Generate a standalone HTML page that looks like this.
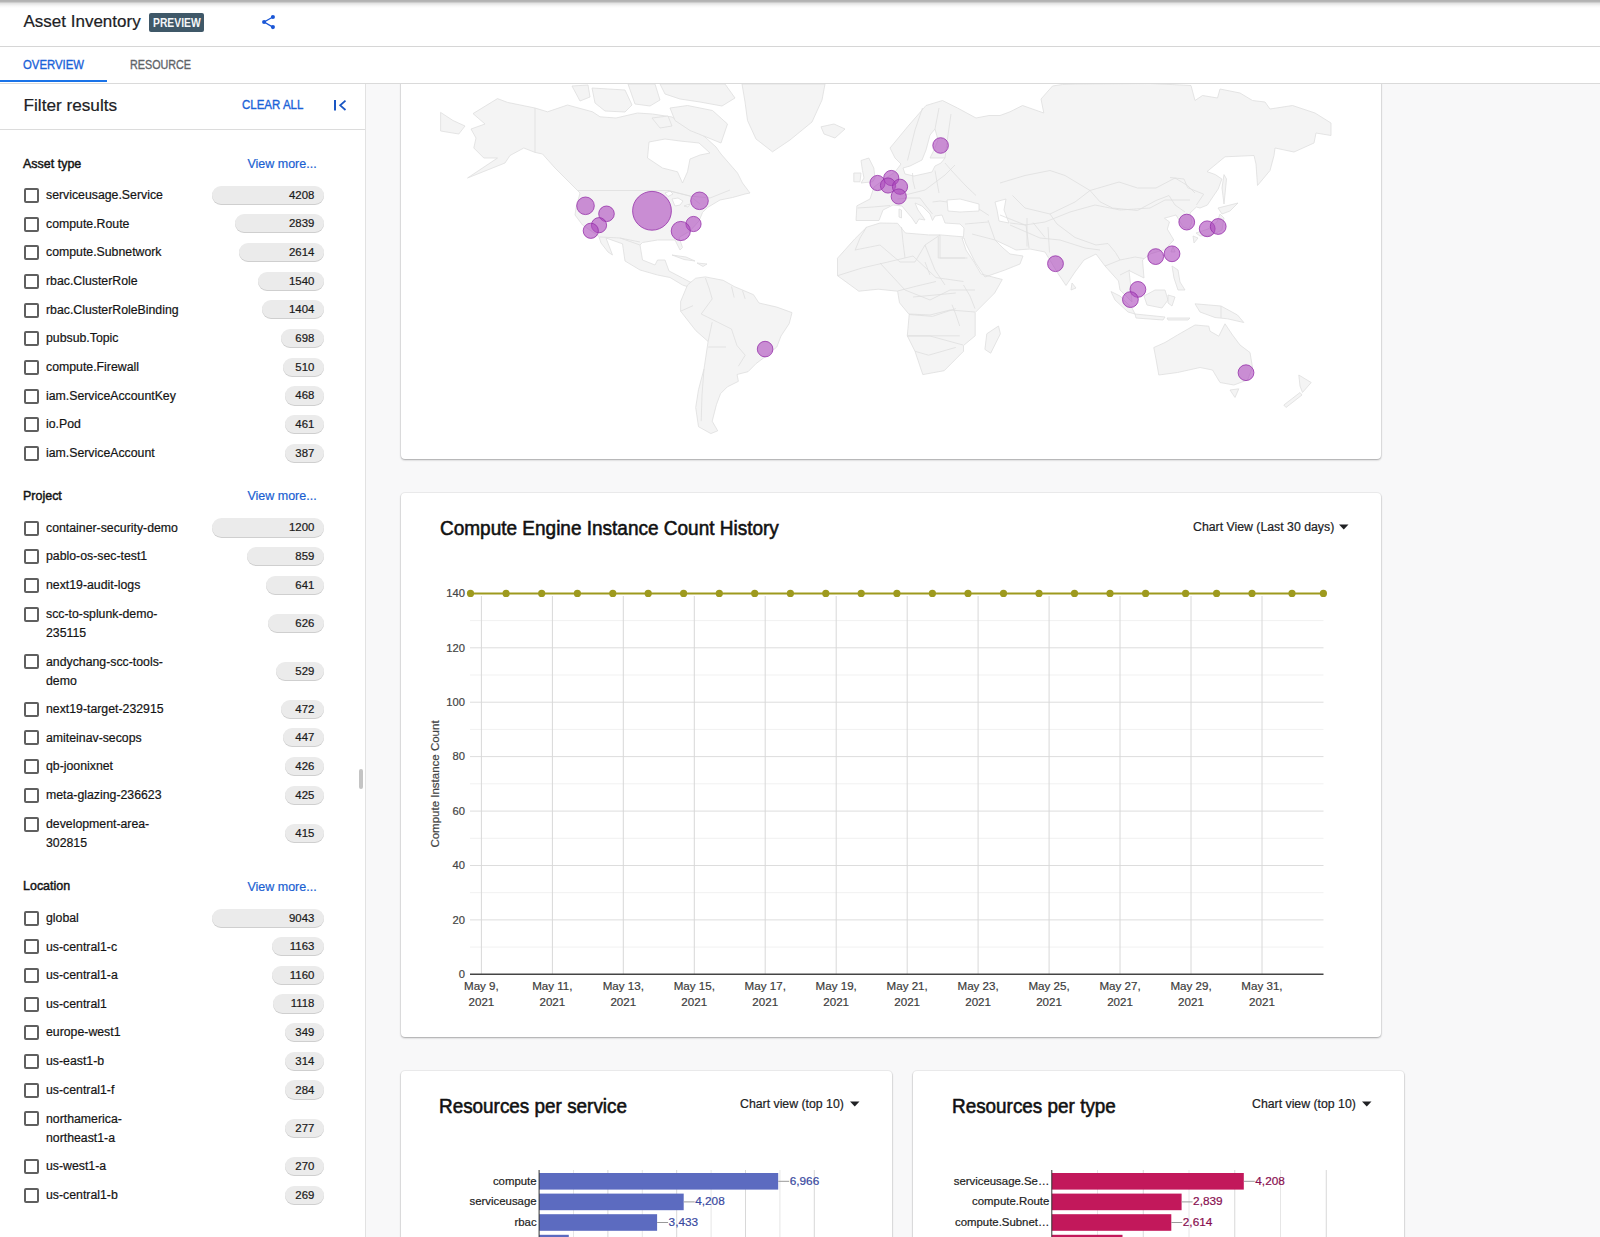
<!DOCTYPE html><html><head><meta charset="utf-8"><style>
html,body{margin:0;padding:0;width:1600px;height:1237px;overflow:hidden;background:#fff;position:relative;font-family:"Liberation Sans",sans-serif}
.t{position:absolute;white-space:nowrap;line-height:1;-webkit-text-stroke:0.2px currentColor}
</style></head><body>
<div style="position:absolute;left:0;top:0;width:1600px;height:8px;background:linear-gradient(#b0b0b0 0px,#b6b6b6 1.5px,#e4e4e4 3.5px,#f8f8f8 6px,#fff 8px)"></div>
<div class="t" style="top:13.31px;font-size:17px;color:#202124;left:23.50px;">Asset Inventory</div>
<div style="position:absolute;left:149.4px;top:13.4px;width:54.6px;height:18.5px;background:#3f5868;border-radius:2px"></div>
<div class="t" style="top:17.29px;font-size:12.3px;color:#f4f6f8;font-weight:700;-webkit-text-stroke:0;left:152.80px;transform:scaleX(0.84);transform-origin:0 0;">PREVIEW</div>
<svg style="position:absolute;left:260px;top:13px" width="18" height="18" viewBox="0 0 18 18">
<g fill="#1a56d6"><circle cx="12.9" cy="3.95" r="2.05"/><circle cx="4.1" cy="9" r="2.05"/><circle cx="12.9" cy="14.1" r="2.05"/></g>
<path d="M12.9 3.95 L4.1 9 L12.9 14.1" stroke="#1a56d6" stroke-width="1.3" fill="none"/></svg>
<div style="position:absolute;left:0;top:46px;width:1600px;height:1px;background:#d6d6d6"></div>
<div class="t" style="top:58.00px;font-size:13px;color:#1a62d8;left:23.00px;-webkit-text-stroke:0.35px currentColor;transform:scaleX(0.874);transform-origin:0 0;">OVERVIEW</div>
<div class="t" style="top:58.00px;font-size:13px;color:#5f6368;left:130.00px;-webkit-text-stroke:0.35px currentColor;transform:scaleX(0.828);transform-origin:0 0;">RESOURCE</div>
<div style="position:absolute;left:0;top:80px;width:107px;height:2px;background:#1a73e8"></div>
<div style="position:absolute;left:0;top:82.5px;width:1600px;height:1px;background:#dadada"></div>
<div style="position:absolute;left:366px;top:83.5px;width:1234px;height:1154px;background:#f8f8f9"></div>
<div style="position:absolute;left:0;top:83.5px;width:365px;height:1154px;background:#fff;border-right:1px solid #e2e2e2"></div>
<div class="t" style="top:96.74px;font-size:17.2px;color:#202124;left:23.50px;">Filter results</div>
<div class="t" style="top:99.22px;font-size:12.5px;color:#1a62d8;left:241.50px;-webkit-text-stroke:0.35px currentColor;transform:scaleX(0.92);transform-origin:0 0;">CLEAR ALL</div>
<svg style="position:absolute;left:332px;top:97px" width="16" height="16" viewBox="0 0 16 16">
<path d="M3 3 V13.5" stroke="#1a56c4" stroke-width="2" fill="none"/>
<path d="M13.5 3.6 L8.2 8.3 L13.5 13" stroke="#1a56c4" stroke-width="1.8" fill="none"/></svg>
<div style="position:absolute;left:0;top:128.5px;width:365px;height:1px;background:#dcdcdc"></div>
<div style="position:absolute;left:359px;top:769px;width:4px;height:20px;background:#c4c4c4;border-radius:2px"></div>
<div class="t" style="top:157.66px;font-size:12.8px;color:#141414;left:23.00px;-webkit-text-stroke:0.45px currentColor;transform:scaleX(0.975);transform-origin:0 0;">Asset type</div>
<div class="t" style="top:157.72px;font-size:12.5px;color:#1a5fd2;left:247.40px;">View more...</div>
<div style="position:absolute;left:23.5px;top:187.80px;width:11px;height:11px;border:2px solid #5f5f5f;border-radius:2px"></div>
<div class="t" style="top:188.99px;font-size:12.3px;color:#141414;left:46.00px;">serviceusage.Service</div>
<div style="position:absolute;left:212.4px;top:185.50px;width:111.9px;height:18.3px;background:#ebebeb;border-radius:9.5px;box-shadow:0 1px 0.5px #cfcfcf"></div>
<div class="t" style="top:189.65px;font-size:11.4px;color:#1a1a1a;right:1285.70px;">4208</div>
<div style="position:absolute;left:23.5px;top:216.50px;width:11px;height:11px;border:2px solid #5f5f5f;border-radius:2px"></div>
<div class="t" style="top:217.69px;font-size:12.3px;color:#141414;left:46.00px;">compute.Route</div>
<div style="position:absolute;left:235.2px;top:214.20px;width:89.1px;height:18.3px;background:#ebebeb;border-radius:9.5px;box-shadow:0 1px 0.5px #cfcfcf"></div>
<div class="t" style="top:218.35px;font-size:11.4px;color:#1a1a1a;right:1285.70px;">2839</div>
<div style="position:absolute;left:23.5px;top:245.20px;width:11px;height:11px;border:2px solid #5f5f5f;border-radius:2px"></div>
<div class="t" style="top:246.39px;font-size:12.3px;color:#141414;left:46.00px;">compute.Subnetwork</div>
<div style="position:absolute;left:239.4px;top:242.90px;width:84.9px;height:18.3px;background:#ebebeb;border-radius:9.5px;box-shadow:0 1px 0.5px #cfcfcf"></div>
<div class="t" style="top:247.05px;font-size:11.4px;color:#1a1a1a;right:1285.70px;">2614</div>
<div style="position:absolute;left:23.5px;top:273.90px;width:11px;height:11px;border:2px solid #5f5f5f;border-radius:2px"></div>
<div class="t" style="top:275.09px;font-size:12.3px;color:#141414;left:46.00px;">rbac.ClusterRole</div>
<div style="position:absolute;left:258.3px;top:271.60px;width:66.0px;height:18.3px;background:#ebebeb;border-radius:9.5px;box-shadow:0 1px 0.5px #cfcfcf"></div>
<div class="t" style="top:275.75px;font-size:11.4px;color:#1a1a1a;right:1285.70px;">1540</div>
<div style="position:absolute;left:23.5px;top:302.50px;width:11px;height:11px;border:2px solid #5f5f5f;border-radius:2px"></div>
<div class="t" style="top:303.69px;font-size:12.3px;color:#141414;left:46.00px;">rbac.ClusterRoleBinding</div>
<div style="position:absolute;left:262.3px;top:300.20px;width:62.0px;height:18.3px;background:#ebebeb;border-radius:9.5px;box-shadow:0 1px 0.5px #cfcfcf"></div>
<div class="t" style="top:304.35px;font-size:11.4px;color:#1a1a1a;right:1285.70px;">1404</div>
<div style="position:absolute;left:23.5px;top:331.20px;width:11px;height:11px;border:2px solid #5f5f5f;border-radius:2px"></div>
<div class="t" style="top:332.39px;font-size:12.3px;color:#141414;left:46.00px;">pubsub.Topic</div>
<div style="position:absolute;left:281.0px;top:328.90px;width:43.3px;height:18.3px;background:#ebebeb;border-radius:9.5px;box-shadow:0 1px 0.5px #cfcfcf"></div>
<div class="t" style="top:333.05px;font-size:11.4px;color:#1a1a1a;right:1285.70px;">698</div>
<div style="position:absolute;left:23.5px;top:359.90px;width:11px;height:11px;border:2px solid #5f5f5f;border-radius:2px"></div>
<div class="t" style="top:361.09px;font-size:12.3px;color:#141414;left:46.00px;">compute.Firewall</div>
<div style="position:absolute;left:282.9px;top:357.60px;width:41.4px;height:18.3px;background:#ebebeb;border-radius:9.5px;box-shadow:0 1px 0.5px #cfcfcf"></div>
<div class="t" style="top:361.75px;font-size:11.4px;color:#1a1a1a;right:1285.70px;">510</div>
<div style="position:absolute;left:23.5px;top:388.60px;width:11px;height:11px;border:2px solid #5f5f5f;border-radius:2px"></div>
<div class="t" style="top:389.79px;font-size:12.3px;color:#141414;left:46.00px;">iam.ServiceAccountKey</div>
<div style="position:absolute;left:284.8px;top:386.30px;width:39.5px;height:18.3px;background:#ebebeb;border-radius:9.5px;box-shadow:0 1px 0.5px #cfcfcf"></div>
<div class="t" style="top:390.45px;font-size:11.4px;color:#1a1a1a;right:1285.70px;">468</div>
<div style="position:absolute;left:23.5px;top:417.30px;width:11px;height:11px;border:2px solid #5f5f5f;border-radius:2px"></div>
<div class="t" style="top:418.49px;font-size:12.3px;color:#141414;left:46.00px;">io.Pod</div>
<div style="position:absolute;left:284.8px;top:415.00px;width:39.5px;height:18.3px;background:#ebebeb;border-radius:9.5px;box-shadow:0 1px 0.5px #cfcfcf"></div>
<div class="t" style="top:419.15px;font-size:11.4px;color:#1a1a1a;right:1285.70px;">461</div>
<div style="position:absolute;left:23.5px;top:445.90px;width:11px;height:11px;border:2px solid #5f5f5f;border-radius:2px"></div>
<div class="t" style="top:447.09px;font-size:12.3px;color:#141414;left:46.00px;">iam.ServiceAccount</div>
<div style="position:absolute;left:284.8px;top:443.60px;width:39.5px;height:18.3px;background:#ebebeb;border-radius:9.5px;box-shadow:0 1px 0.5px #cfcfcf"></div>
<div class="t" style="top:447.75px;font-size:11.4px;color:#1a1a1a;right:1285.70px;">387</div>
<div class="t" style="top:489.66px;font-size:12.8px;color:#141414;left:23.00px;-webkit-text-stroke:0.45px currentColor;transform:scaleX(0.975);transform-origin:0 0;">Project</div>
<div class="t" style="top:489.72px;font-size:12.5px;color:#1a5fd2;left:247.40px;">View more...</div>
<div style="position:absolute;left:23.5px;top:520.60px;width:11px;height:11px;border:2px solid #5f5f5f;border-radius:2px"></div>
<div class="t" style="top:521.79px;font-size:12.3px;color:#141414;left:46.00px;">container-security-demo</div>
<div style="position:absolute;left:212.0px;top:518.30px;width:112.3px;height:18.3px;background:#ebebeb;border-radius:9.5px;box-shadow:0 1px 0.5px #cfcfcf"></div>
<div class="t" style="top:522.45px;font-size:11.4px;color:#1a1a1a;right:1285.70px;">1200</div>
<div style="position:absolute;left:23.5px;top:549.20px;width:11px;height:11px;border:2px solid #5f5f5f;border-radius:2px"></div>
<div class="t" style="top:550.39px;font-size:12.3px;color:#141414;left:46.00px;">pablo-os-sec-test1</div>
<div style="position:absolute;left:246.7px;top:546.90px;width:77.6px;height:18.3px;background:#ebebeb;border-radius:9.5px;box-shadow:0 1px 0.5px #cfcfcf"></div>
<div class="t" style="top:551.05px;font-size:11.4px;color:#1a1a1a;right:1285.70px;">859</div>
<div style="position:absolute;left:23.5px;top:577.80px;width:11px;height:11px;border:2px solid #5f5f5f;border-radius:2px"></div>
<div class="t" style="top:578.99px;font-size:12.3px;color:#141414;left:46.00px;">next19-audit-logs</div>
<div style="position:absolute;left:265.7px;top:575.50px;width:58.6px;height:18.3px;background:#ebebeb;border-radius:9.5px;box-shadow:0 1px 0.5px #cfcfcf"></div>
<div class="t" style="top:579.65px;font-size:11.4px;color:#1a1a1a;right:1285.70px;">641</div>
<div style="position:absolute;left:23.5px;top:606.60px;width:11px;height:11px;border:2px solid #5f5f5f;border-radius:2px"></div>
<div class="t" style="top:607.79px;font-size:12.3px;color:#141414;left:46.00px;">scc-to-splunk-demo-</div>
<div class="t" style="top:626.79px;font-size:12.3px;color:#141414;left:46.00px;">235115</div>
<div style="position:absolute;left:267.9px;top:613.90px;width:56.4px;height:18.3px;background:#ebebeb;border-radius:9.5px;box-shadow:0 1px 0.5px #cfcfcf"></div>
<div class="t" style="top:618.05px;font-size:11.4px;color:#1a1a1a;right:1285.70px;">626</div>
<div style="position:absolute;left:23.5px;top:654.40px;width:11px;height:11px;border:2px solid #5f5f5f;border-radius:2px"></div>
<div class="t" style="top:655.59px;font-size:12.3px;color:#141414;left:46.00px;">andychang-scc-tools-</div>
<div class="t" style="top:674.59px;font-size:12.3px;color:#141414;left:46.00px;">demo</div>
<div style="position:absolute;left:275.6px;top:661.70px;width:48.7px;height:18.3px;background:#ebebeb;border-radius:9.5px;box-shadow:0 1px 0.5px #cfcfcf"></div>
<div class="t" style="top:665.85px;font-size:11.4px;color:#1a1a1a;right:1285.70px;">529</div>
<div style="position:absolute;left:23.5px;top:701.90px;width:11px;height:11px;border:2px solid #5f5f5f;border-radius:2px"></div>
<div class="t" style="top:703.09px;font-size:12.3px;color:#141414;left:46.00px;">next19-target-232915</div>
<div style="position:absolute;left:281.0px;top:699.60px;width:43.3px;height:18.3px;background:#ebebeb;border-radius:9.5px;box-shadow:0 1px 0.5px #cfcfcf"></div>
<div class="t" style="top:703.75px;font-size:11.4px;color:#1a1a1a;right:1285.70px;">472</div>
<div style="position:absolute;left:23.5px;top:730.40px;width:11px;height:11px;border:2px solid #5f5f5f;border-radius:2px"></div>
<div class="t" style="top:731.59px;font-size:12.3px;color:#141414;left:46.00px;">amiteinav-secops</div>
<div style="position:absolute;left:283.0px;top:728.10px;width:41.3px;height:18.3px;background:#ebebeb;border-radius:9.5px;box-shadow:0 1px 0.5px #cfcfcf"></div>
<div class="t" style="top:732.25px;font-size:11.4px;color:#1a1a1a;right:1285.70px;">447</div>
<div style="position:absolute;left:23.5px;top:759.30px;width:11px;height:11px;border:2px solid #5f5f5f;border-radius:2px"></div>
<div class="t" style="top:760.49px;font-size:12.3px;color:#141414;left:46.00px;">qb-joonixnet</div>
<div style="position:absolute;left:284.8px;top:757.00px;width:39.5px;height:18.3px;background:#ebebeb;border-radius:9.5px;box-shadow:0 1px 0.5px #cfcfcf"></div>
<div class="t" style="top:761.15px;font-size:11.4px;color:#1a1a1a;right:1285.70px;">426</div>
<div style="position:absolute;left:23.5px;top:787.90px;width:11px;height:11px;border:2px solid #5f5f5f;border-radius:2px"></div>
<div class="t" style="top:789.09px;font-size:12.3px;color:#141414;left:46.00px;">meta-glazing-236623</div>
<div style="position:absolute;left:284.8px;top:785.60px;width:39.5px;height:18.3px;background:#ebebeb;border-radius:9.5px;box-shadow:0 1px 0.5px #cfcfcf"></div>
<div class="t" style="top:789.75px;font-size:11.4px;color:#1a1a1a;right:1285.70px;">425</div>
<div style="position:absolute;left:23.5px;top:816.70px;width:11px;height:11px;border:2px solid #5f5f5f;border-radius:2px"></div>
<div class="t" style="top:817.89px;font-size:12.3px;color:#141414;left:46.00px;">development-area-</div>
<div class="t" style="top:836.89px;font-size:12.3px;color:#141414;left:46.00px;">302815</div>
<div style="position:absolute;left:284.8px;top:824.00px;width:39.5px;height:18.3px;background:#ebebeb;border-radius:9.5px;box-shadow:0 1px 0.5px #cfcfcf"></div>
<div class="t" style="top:828.15px;font-size:11.4px;color:#1a1a1a;right:1285.70px;">415</div>
<div class="t" style="top:880.46px;font-size:12.8px;color:#141414;left:23.00px;-webkit-text-stroke:0.45px currentColor;transform:scaleX(0.975);transform-origin:0 0;">Location</div>
<div class="t" style="top:880.52px;font-size:12.5px;color:#1a5fd2;left:247.40px;">View more...</div>
<div style="position:absolute;left:23.5px;top:910.90px;width:11px;height:11px;border:2px solid #5f5f5f;border-radius:2px"></div>
<div class="t" style="top:912.09px;font-size:12.3px;color:#141414;left:46.00px;">global</div>
<div style="position:absolute;left:212.4px;top:908.60px;width:111.9px;height:18.3px;background:#ebebeb;border-radius:9.5px;box-shadow:0 1px 0.5px #cfcfcf"></div>
<div class="t" style="top:912.75px;font-size:11.4px;color:#1a1a1a;right:1285.70px;">9043</div>
<div style="position:absolute;left:23.5px;top:939.40px;width:11px;height:11px;border:2px solid #5f5f5f;border-radius:2px"></div>
<div class="t" style="top:940.59px;font-size:12.3px;color:#141414;left:46.00px;">us-central1-c</div>
<div style="position:absolute;left:271.5px;top:937.10px;width:52.8px;height:18.3px;background:#ebebeb;border-radius:9.5px;box-shadow:0 1px 0.5px #cfcfcf"></div>
<div class="t" style="top:941.25px;font-size:11.4px;color:#1a1a1a;right:1285.70px;">1163</div>
<div style="position:absolute;left:23.5px;top:968.00px;width:11px;height:11px;border:2px solid #5f5f5f;border-radius:2px"></div>
<div class="t" style="top:969.19px;font-size:12.3px;color:#141414;left:46.00px;">us-central1-a</div>
<div style="position:absolute;left:271.5px;top:965.70px;width:52.8px;height:18.3px;background:#ebebeb;border-radius:9.5px;box-shadow:0 1px 0.5px #cfcfcf"></div>
<div class="t" style="top:969.85px;font-size:11.4px;color:#1a1a1a;right:1285.70px;">1160</div>
<div style="position:absolute;left:23.5px;top:996.60px;width:11px;height:11px;border:2px solid #5f5f5f;border-radius:2px"></div>
<div class="t" style="top:997.79px;font-size:12.3px;color:#141414;left:46.00px;">us-central1</div>
<div style="position:absolute;left:273.3px;top:994.30px;width:51.0px;height:18.3px;background:#ebebeb;border-radius:9.5px;box-shadow:0 1px 0.5px #cfcfcf"></div>
<div class="t" style="top:998.45px;font-size:11.4px;color:#1a1a1a;right:1285.70px;">1118</div>
<div style="position:absolute;left:23.5px;top:1025.30px;width:11px;height:11px;border:2px solid #5f5f5f;border-radius:2px"></div>
<div class="t" style="top:1026.49px;font-size:12.3px;color:#141414;left:46.00px;">europe-west1</div>
<div style="position:absolute;left:284.9px;top:1023.00px;width:39.4px;height:18.3px;background:#ebebeb;border-radius:9.5px;box-shadow:0 1px 0.5px #cfcfcf"></div>
<div class="t" style="top:1027.15px;font-size:11.4px;color:#1a1a1a;right:1285.70px;">349</div>
<div style="position:absolute;left:23.5px;top:1054.00px;width:11px;height:11px;border:2px solid #5f5f5f;border-radius:2px"></div>
<div class="t" style="top:1055.19px;font-size:12.3px;color:#141414;left:46.00px;">us-east1-b</div>
<div style="position:absolute;left:284.9px;top:1051.70px;width:39.4px;height:18.3px;background:#ebebeb;border-radius:9.5px;box-shadow:0 1px 0.5px #cfcfcf"></div>
<div class="t" style="top:1055.85px;font-size:11.4px;color:#1a1a1a;right:1285.70px;">314</div>
<div style="position:absolute;left:23.5px;top:1082.70px;width:11px;height:11px;border:2px solid #5f5f5f;border-radius:2px"></div>
<div class="t" style="top:1083.89px;font-size:12.3px;color:#141414;left:46.00px;">us-central1-f</div>
<div style="position:absolute;left:284.9px;top:1080.40px;width:39.4px;height:18.3px;background:#ebebeb;border-radius:9.5px;box-shadow:0 1px 0.5px #cfcfcf"></div>
<div class="t" style="top:1084.55px;font-size:11.4px;color:#1a1a1a;right:1285.70px;">284</div>
<div style="position:absolute;left:23.5px;top:1111.40px;width:11px;height:11px;border:2px solid #5f5f5f;border-radius:2px"></div>
<div class="t" style="top:1112.59px;font-size:12.3px;color:#141414;left:46.00px;">northamerica-</div>
<div class="t" style="top:1131.59px;font-size:12.3px;color:#141414;left:46.00px;">northeast1-a</div>
<div style="position:absolute;left:284.9px;top:1118.70px;width:39.4px;height:18.3px;background:#ebebeb;border-radius:9.5px;box-shadow:0 1px 0.5px #cfcfcf"></div>
<div class="t" style="top:1122.85px;font-size:11.4px;color:#1a1a1a;right:1285.70px;">277</div>
<div style="position:absolute;left:23.5px;top:1159.20px;width:11px;height:11px;border:2px solid #5f5f5f;border-radius:2px"></div>
<div class="t" style="top:1160.39px;font-size:12.3px;color:#141414;left:46.00px;">us-west1-a</div>
<div style="position:absolute;left:284.9px;top:1156.90px;width:39.4px;height:18.3px;background:#ebebeb;border-radius:9.5px;box-shadow:0 1px 0.5px #cfcfcf"></div>
<div class="t" style="top:1161.05px;font-size:11.4px;color:#1a1a1a;right:1285.70px;">270</div>
<div style="position:absolute;left:23.5px;top:1187.80px;width:11px;height:11px;border:2px solid #5f5f5f;border-radius:2px"></div>
<div class="t" style="top:1188.99px;font-size:12.3px;color:#141414;left:46.00px;">us-central1-b</div>
<div style="position:absolute;left:284.9px;top:1185.50px;width:39.4px;height:18.3px;background:#ebebeb;border-radius:9.5px;box-shadow:0 1px 0.5px #cfcfcf"></div>
<div class="t" style="top:1189.65px;font-size:11.4px;color:#1a1a1a;right:1285.70px;">269</div>
<div style="position:absolute;background:#fff;border-radius:4px;box-shadow:0 0 0 1px rgba(0,0,0,0.045),0 1px 2px rgba(0,0,0,0.3);left:400.5px;top:60px;width:980px;height:398.5px"></div>
<svg style="position:absolute;left:0;top:0" width="1600" height="1237"><polygon points="473.0,113.6 497.5,98.6 507.5,102.4 535.0,108.0 547.5,111.8 567.5,105.0 592.5,111.8 600.0,116.8 616.0,118.0 637.5,113.0 652.5,114.0 672.0,117.0 690.0,127.0 705.0,137.0 716.0,147.0 721.0,154.0 737.5,173.0 742.5,183.0 750.0,193.0 745.0,194.0 732.5,197.5 720.0,200.0 707.5,207.5 702.5,212.5 699.0,221.0 690.0,231.0 679.0,237.5 682.5,247.5 680.0,250.0 675.0,240.0 657.5,240.0 642.5,242.5 640.0,245.0 642.5,260.0 655.0,265.0 657.5,260.0 665.0,260.0 669.0,271.0 682.5,278.0 690.0,282.0 695.0,282.5 690.0,287.5 682.5,285.0 670.0,277.5 657.5,275.0 640.0,270.0 625.0,261.0 622.5,243.8 606.0,238.0 612.5,255.0 608.0,252.0 601.0,243.0 598.8,236.2 582.5,225.0 575.0,215.0 576.0,208.0 580.0,193.0 555.0,168.0 542.5,154.0 535.0,152.4 523.8,148.0 510.0,155.5 505.0,163.0 467.5,178.0 497.5,158.0 483.8,158.0 473.8,148.0 476.0,138.0 471.0,129.0 485.0,124.0" fill="#f4f4f4" stroke="#dedede" stroke-width="0.8" stroke-linejoin="round"/><polygon points="649.0,142.0 665.0,139.0 680.0,141.0 699.0,143.0 710.0,153.0 700.0,155.0 690.0,159.0 687.5,171.8 682.5,183.0 677.5,171.8 662.5,168.0 647.5,158.0" fill="#ffffff" stroke="#dedede" stroke-width="0.8" stroke-linejoin="round"/><polygon points="670.0,108.0 687.5,105.5 712.5,110.5 727.5,124.0 721.0,143.0 702.5,135.5 690.0,130.5 675.0,120.5" fill="#f4f4f4" stroke="#dedede" stroke-width="0.8" stroke-linejoin="round"/><polygon points="572.0,86.0 588.0,85.0 590.0,97.0 580.0,101.0" fill="#f4f4f4" stroke="#dedede" stroke-width="0.8" stroke-linejoin="round"/><polygon points="592.0,88.0 625.0,90.0 632.0,105.0 625.0,112.0 605.0,111.0 595.0,103.0" fill="#f4f4f4" stroke="#dedede" stroke-width="0.8" stroke-linejoin="round"/><polygon points="628.0,84.0 655.0,84.0 660.0,100.0 650.0,106.0 635.0,104.0" fill="#f4f4f4" stroke="#dedede" stroke-width="0.8" stroke-linejoin="round"/><polygon points="660.0,84.0 725.0,84.0 735.0,98.0 722.0,106.0 700.0,102.0 680.0,99.0 665.0,94.0" fill="#f4f4f4" stroke="#dedede" stroke-width="0.8" stroke-linejoin="round"/><polygon points="652.0,118.0 668.0,116.0 672.0,126.0 660.0,128.0" fill="#f4f4f4" stroke="#dedede" stroke-width="0.8" stroke-linejoin="round"/><polygon points="742.0,84.0 825.0,84.0 822.0,100.0 812.0,122.0 790.0,140.0 772.5,151.8 756.0,139.0 747.5,120.5 745.0,101.8" fill="#f4f4f4" stroke="#dedede" stroke-width="0.8" stroke-linejoin="round"/><polygon points="821.0,126.8 834.0,124.0 845.0,129.0 835.0,138.0 824.0,134.0" fill="#f4f4f4" stroke="#dedede" stroke-width="0.8" stroke-linejoin="round"/><polygon points="440.6,112.4 453.0,120.5 465.0,126.0 458.8,134.0 440.6,131.0" fill="#f4f4f4" stroke="#dedede" stroke-width="0.8" stroke-linejoin="round"/><polygon points="680.6,301.6 687.5,285.0 695.7,278.2 705.4,276.9 723.2,280.3 734.2,286.5 753.5,294.7 759.0,303.0 776.8,307.1 792.0,312.6 789.2,323.6 781.0,336.0 776.8,347.0 767.2,355.2 756.2,363.5 748.0,371.7 737.0,374.5 738.4,381.3 727.4,386.8 720.5,393.7 716.4,404.7 712.2,421.2 717.7,430.8 710.9,433.6 698.5,426.7 695.7,407.5 698.5,389.6 704.0,369.0 708.1,341.5 695.7,330.5 680.6,311.2" fill="#f4f4f4" stroke="#dedede" stroke-width="0.8" stroke-linejoin="round"/><polygon points="672.0,255.0 686.0,257.0 695.0,261.0 684.0,259.5" fill="#f4f4f4" stroke="#dedede" stroke-width="0.8" stroke-linejoin="round"/><polygon points="697.0,263.0 707.0,264.0 703.0,266.5" fill="#f4f4f4" stroke="#dedede" stroke-width="0.8" stroke-linejoin="round"/><polygon points="856.0,220.5 856.9,205.8 870.0,199.0 874.0,187.0 886.0,178.0 895.0,172.0 901.0,164.0 895.0,158.0 890.0,148.0 907.5,126.8 926.0,105.5 942.5,100.5 957.5,108.0 976.0,118.0 989.0,115.5 1000.0,115.5 1010.0,111.8 1022.5,105.5 1043.8,113.0 1041.0,99.0 1052.5,86.0 1062.5,84.5 1075.0,84.0 1150.0,83.5 1191.0,85.5 1195.0,100.5 1202.5,95.5 1217.5,98.0 1220.0,89.0 1240.0,93.0 1252.5,100.5 1265.0,102.0 1270.0,109.0 1292.5,105.5 1315.0,113.0 1331.0,123.0 1331.0,135.5 1316.0,133.0 1314.0,143.0 1294.0,152.0 1275.0,148.0 1274.0,155.5 1270.0,170.5 1257.5,185.5 1256.0,164.0 1254.0,155.5 1225.0,156.8 1207.0,171.6 1215.3,174.6 1221.9,179.0 1218.2,189.0 1207.3,205.1 1200.0,208.0 1196.4,207.0 1190.0,213.0 1192.0,222.0 1189.0,229.0 1183.0,227.0 1176.0,215.0 1164.4,218.2 1169.5,221.9 1167.3,229.1 1173.8,240.0 1165.0,249.5 1150.0,254.0 1142.5,260.0 1144.0,278.0 1129.0,270.5 1130.5,284.0 1132.0,302.0 1120.0,290.0 1118.5,281.0 1105.0,266.0 1096.0,254.0 1084.0,260.0 1075.0,272.0 1066.0,285.5 1057.0,272.0 1048.0,257.0 1045.0,252.0 1030.0,249.0 1016.0,250.0 1008.0,246.0 995.0,240.0 1003.0,248.0 1010.0,254.0 1023.0,256.0 1020.0,264.0 1005.0,270.0 985.0,277.0 975.0,262.0 966.0,244.0 964.0,238.0 962.0,238.0 966.0,250.0 974.0,262.0 981.0,274.0 1002.3,279.5 994.6,293.1 975.2,312.5 975.2,335.8 963.5,345.5 963.5,351.3 944.2,370.7 922.8,374.6 915.0,351.3 907.3,335.8 909.2,314.5 899.5,302.8 897.6,291.2 878.2,289.2 858.8,291.2 837.5,275.7 837.5,258.2 854.9,238.8 866.6,227.2 880.0,223.0 897.6,223.3 905.4,233.0 928.6,234.9 940.3,234.9 963.5,236.9 964.0,228.0 960.0,224.0 945.0,223.0 942.0,215.0 935.0,216.0 932.5,220.5 930.0,214.0 922.0,206.0 915.0,203.0 918.0,210.0 923.0,217.0 925.0,220.0 919.0,219.0 916.0,224.0 912.0,218.0 906.0,211.0 902.0,206.0 893.0,205.0 883.0,210.0 879.0,220.5" fill="#f4f4f4" stroke="#dedede" stroke-width="0.8" stroke-linejoin="round"/><polygon points="665.0,193.0 670.0,191.0 673.0,194.0 668.0,196.5" fill="#ffffff" stroke="#dedede" stroke-width="0.8" stroke-linejoin="round"/><polygon points="672.0,199.0 678.0,198.0 683.0,201.0 680.0,205.0 675.0,206.0" fill="#ffffff" stroke="#dedede" stroke-width="0.8" stroke-linejoin="round"/><polygon points="684.0,206.0 690.0,204.0 688.0,207.0" fill="#ffffff" stroke="#dedede" stroke-width="0.8" stroke-linejoin="round"/><polygon points="903.0,168.0 910.0,166.0 922.0,160.0 926.0,150.0 930.0,135.0 935.0,129.0 938.0,140.0 934.0,150.0 930.0,158.0 945.0,158.0 941.0,163.0 935.0,166.0 932.0,172.0 914.0,176.0 905.0,174.0" fill="#ffffff" stroke="#dedede" stroke-width="0.8" stroke-linejoin="round"/><polygon points="947.0,200.0 960.0,199.0 979.0,204.0 979.0,211.0 960.0,212.0 948.0,211.0" fill="#ffffff" stroke="#dedede" stroke-width="0.8" stroke-linejoin="round"/><polygon points="995.0,202.0 1006.0,199.0 1004.0,210.0 1009.0,223.0 999.0,221.0 997.0,210.0" fill="#ffffff" stroke="#dedede" stroke-width="0.8" stroke-linejoin="round"/><polygon points="899.0,209.0 901.5,210.0 901.5,218.0 899.0,217.0" fill="#f4f4f4" stroke="#dedede" stroke-width="0.8" stroke-linejoin="round"/><polygon points="868.8,158.0 873.8,168.0 875.0,178.0 872.5,181.8 861.0,183.0 864.0,178.0 862.5,170.5 861.0,160.5" fill="#f4f4f4" stroke="#dedede" stroke-width="0.8" stroke-linejoin="round"/><polygon points="853.8,173.0 861.0,173.0 860.0,181.8 853.8,181.8" fill="#f4f4f4" stroke="#dedede" stroke-width="0.8" stroke-linejoin="round"/><polygon points="1218.0,208.0 1230.0,205.0 1238.0,203.0 1230.0,211.0 1222.0,214.0" fill="#f4f4f4" stroke="#dedede" stroke-width="0.8" stroke-linejoin="round"/><polygon points="1220.0,214.0 1224.0,218.0 1222.0,230.0 1212.0,235.0 1200.0,236.0 1196.0,233.0 1208.0,229.0 1217.0,222.0" fill="#f4f4f4" stroke="#dedede" stroke-width="0.8" stroke-linejoin="round"/><polygon points="1193.0,236.0 1198.0,238.0 1194.0,243.0" fill="#f4f4f4" stroke="#dedede" stroke-width="0.8" stroke-linejoin="round"/><polygon points="1224.0,174.6 1226.5,179.0 1224.0,204.0 1222.0,188.0" fill="#f4f4f4" stroke="#dedede" stroke-width="0.8" stroke-linejoin="round"/><polygon points="1173.0,246.0 1175.0,252.0 1171.0,252.0" fill="#f4f4f4" stroke="#dedede" stroke-width="0.8" stroke-linejoin="round"/><polygon points="1111.0,291.5 1120.0,296.0 1132.0,308.0 1135.0,314.0 1128.0,312.0 1115.0,300.0" fill="#f4f4f4" stroke="#dedede" stroke-width="0.8" stroke-linejoin="round"/><polygon points="1135.0,314.0 1165.0,317.0 1163.0,320.0 1136.0,318.0" fill="#f4f4f4" stroke="#dedede" stroke-width="0.8" stroke-linejoin="round"/><polygon points="1144.0,296.0 1155.0,290.0 1165.0,290.0 1168.0,300.0 1162.0,308.0 1147.0,305.0" fill="#f4f4f4" stroke="#dedede" stroke-width="0.8" stroke-linejoin="round"/><polygon points="1168.0,295.0 1175.0,297.0 1172.0,306.0 1168.0,303.0" fill="#f4f4f4" stroke="#dedede" stroke-width="0.8" stroke-linejoin="round"/><polygon points="1172.0,266.0 1178.0,270.0 1180.0,282.0 1185.0,290.0 1178.0,290.0 1174.0,278.0" fill="#f4f4f4" stroke="#dedede" stroke-width="0.8" stroke-linejoin="round"/><polygon points="1195.0,303.8 1221.0,306.0 1237.5,315.0 1243.8,322.5 1227.5,318.8 1215.0,317.5 1200.0,312.0" fill="#f4f4f4" stroke="#dedede" stroke-width="0.8" stroke-linejoin="round"/><polygon points="1167.0,318.0 1190.0,318.0 1188.0,320.0 1168.0,320.0" fill="#f4f4f4" stroke="#dedede" stroke-width="0.8" stroke-linejoin="round"/><polygon points="1072.0,283.0 1076.0,288.0 1071.0,290.0" fill="#f4f4f4" stroke="#dedede" stroke-width="0.8" stroke-linejoin="round"/><polygon points="998.5,326.0 1000.4,333.8 990.7,353.2 984.9,349.4 986.8,333.8" fill="#f4f4f4" stroke="#dedede" stroke-width="0.8" stroke-linejoin="round"/><polygon points="1153.8,347.5 1165.0,342.5 1177.5,335.0 1195.0,325.0 1208.8,326.2 1210.0,331.2 1218.8,336.2 1225.0,323.8 1232.5,335.0 1240.0,345.0 1250.0,352.5 1252.5,367.5 1247.5,380.0 1233.8,385.0 1220.0,382.5 1212.5,370.0 1200.0,367.5 1177.5,372.5 1158.8,375.0 1156.2,360.0" fill="#f4f4f4" stroke="#dedede" stroke-width="0.8" stroke-linejoin="round"/><polygon points="1230.0,390.0 1238.8,388.8 1235.0,397.5" fill="#f4f4f4" stroke="#dedede" stroke-width="0.8" stroke-linejoin="round"/><polygon points="1298.8,375.0 1311.2,382.5 1302.5,392.5 1300.0,386.0" fill="#f4f4f4" stroke="#dedede" stroke-width="0.8" stroke-linejoin="round"/><polygon points="1300.0,392.5 1302.0,395.0 1286.0,407.5 1283.8,405.0" fill="#f4f4f4" stroke="#dedede" stroke-width="0.8" stroke-linejoin="round"/><polyline points="535.0,108.0 535.0,152.4" fill="none" stroke="#dedede" stroke-width="0.8"/><polyline points="578.0,190.5 668.0,190.5 690.0,196.0 700.0,204.0" fill="none" stroke="#dedede" stroke-width="0.8"/><polyline points="620.0,238.0 640.0,242.0" fill="none" stroke="#dedede" stroke-width="0.8"/><polyline points="855.0,250.0 880.0,245.0 900.0,262.0 915.0,262.0 925.0,245.0 940.0,235.0" fill="none" stroke="#dedede" stroke-width="0.8"/><polyline points="940.0,235.0 940.0,258.0 965.0,258.0" fill="none" stroke="#dedede" stroke-width="0.8"/><polyline points="880.0,263.0 905.0,290.0 930.0,300.0 950.0,290.0 975.0,290.0" fill="none" stroke="#dedede" stroke-width="0.8"/><polyline points="909.0,314.0 930.0,315.0 950.0,310.0 975.0,312.0" fill="none" stroke="#dedede" stroke-width="0.8"/><polyline points="907.0,336.0 930.0,336.0 963.0,345.0" fill="none" stroke="#dedede" stroke-width="0.8"/><polyline points="925.0,245.0 935.0,270.0 945.0,285.0" fill="none" stroke="#dedede" stroke-width="0.8"/><polyline points="1000.0,215.0 1025.0,225.0 1045.0,222.0 1070.0,212.0 1095.0,205.0 1120.0,210.0 1150.0,208.0 1165.0,200.0 1190.0,200.0" fill="none" stroke="#dedede" stroke-width="0.8"/><polyline points="1010.0,225.0 1040.0,238.0 1060.0,240.0 1085.0,248.0 1100.0,250.0" fill="none" stroke="#dedede" stroke-width="0.8"/><polyline points="905.0,195.0 925.0,190.0 945.0,175.0 955.0,165.0" fill="none" stroke="#dedede" stroke-width="0.8"/><polyline points="857.5,208.0 873.0,207.0 890.0,205.5" fill="none" stroke="#dedede" stroke-width="0.8"/><polyline points="890.0,178.0 896.0,186.0 901.0,195.5" fill="none" stroke="#dedede" stroke-width="0.8"/><polyline points="912.5,173.0 913.0,181.0 915.0,189.0" fill="none" stroke="#dedede" stroke-width="0.8"/><polyline points="935.0,170.5 937.0,182.0 939.0,193.0" fill="none" stroke="#dedede" stroke-width="0.8"/><polyline points="897.5,199.0 908.0,198.0 920.0,198.0" fill="none" stroke="#dedede" stroke-width="0.8"/><polyline points="957.5,177.0 966.0,186.0 976.0,195.5" fill="none" stroke="#dedede" stroke-width="0.8"/><polyline points="951.0,114.0 948.0,135.0 945.0,158.0" fill="none" stroke="#dedede" stroke-width="0.8"/><polyline points="922.5,108.0 915.0,130.0 907.5,160.5" fill="none" stroke="#dedede" stroke-width="0.8"/><polyline points="939.0,108.0 935.0,129.0" fill="none" stroke="#dedede" stroke-width="0.8"/><polyline points="920.0,198.0 926.0,206.0 932.5,214.0" fill="none" stroke="#dedede" stroke-width="0.8"/><polyline points="932.5,202.0 940.0,201.0 947.5,202.0" fill="none" stroke="#dedede" stroke-width="0.8"/><polyline points="945.0,163.0 951.0,170.0 957.5,177.0" fill="none" stroke="#dedede" stroke-width="0.8"/><polyline points="979.0,209.0 989.0,215.5" fill="none" stroke="#dedede" stroke-width="0.8"/><polyline points="866.6,227.0 860.0,238.0 855.0,250.4" fill="none" stroke="#dedede" stroke-width="0.8"/><polyline points="901.5,227.0 903.0,242.0 905.0,258.0" fill="none" stroke="#dedede" stroke-width="0.8"/><polyline points="938.3,236.9 938.3,258.0" fill="none" stroke="#dedede" stroke-width="0.8"/><polyline points="938.3,258.0 967.4,258.0" fill="none" stroke="#dedede" stroke-width="0.8"/><polyline points="837.5,275.7 862.0,268.0 888.0,262.0 913.0,256.0 936.0,277.6 963.5,281.5" fill="none" stroke="#dedede" stroke-width="0.8"/><polyline points="897.6,291.0 917.0,286.0 936.0,281.5" fill="none" stroke="#dedede" stroke-width="0.8"/><polyline points="913.0,297.0 935.0,295.0 955.8,293.0" fill="none" stroke="#dedede" stroke-width="0.8"/><polyline points="909.0,314.5 932.5,316.4 955.8,308.6" fill="none" stroke="#dedede" stroke-width="0.8"/><polyline points="907.3,335.8 935.0,335.8 959.7,335.8" fill="none" stroke="#dedede" stroke-width="0.8"/><polyline points="915.0,351.3 928.6,355.2 955.8,347.4" fill="none" stroke="#dedede" stroke-width="0.8"/><polyline points="963.5,285.0 970.0,296.0 975.0,308.6" fill="none" stroke="#dedede" stroke-width="0.8"/><polyline points="952.0,304.7 956.0,315.0 959.7,326.0" fill="none" stroke="#dedede" stroke-width="0.8"/><polyline points="925.0,262.0 930.0,275.0" fill="none" stroke="#dedede" stroke-width="0.8"/><polyline points="705.4,278.0 709.0,288.0 712.2,298.9" fill="none" stroke="#dedede" stroke-width="0.8"/><polyline points="712.2,298.9 701.2,314.0 717.7,322.2 731.5,329.1 737.0,345.6 745.2,355.2 738.4,366.2" fill="none" stroke="#dedede" stroke-width="0.8"/><polyline points="708.1,341.5 712.2,322.2" fill="none" stroke="#dedede" stroke-width="0.8"/><polyline points="704.0,369.0 702.0,395.0 701.2,421.2" fill="none" stroke="#dedede" stroke-width="0.8"/><polyline points="708.1,347.0 726.0,347.0" fill="none" stroke="#dedede" stroke-width="0.8"/><polyline points="731.5,286.5 734.2,297.5" fill="none" stroke="#dedede" stroke-width="0.8"/><polyline points="742.5,290.6 745.2,298.9" fill="none" stroke="#dedede" stroke-width="0.8"/><polyline points="680.6,311.2 693.0,305.7" fill="none" stroke="#dedede" stroke-width="0.8"/><polyline points="1000.0,183.0 1025.0,175.5 1050.0,170.5 1065.0,175.5 1090.0,190.5 1119.0,182.0 1137.5,188.0 1156.0,188.0 1175.0,178.0 1187.5,185.5 1195.0,193.0" fill="none" stroke="#dedede" stroke-width="0.8"/><polyline points="1090.0,190.5 1100.0,201.8 1112.5,208.0 1137.5,210.5 1156.0,200.5 1169.0,195.5 1175.0,205.0 1185.0,212.0" fill="none" stroke="#dedede" stroke-width="0.8"/><polyline points="1012.5,195.5 1025.0,208.0 1050.0,214.0 1075.0,202.0 1090.0,190.5" fill="none" stroke="#dedede" stroke-width="0.8"/><polyline points="1048.0,227.0 1049.5,252.5" fill="none" stroke="#dedede" stroke-width="0.8"/><polyline points="1057.0,224.0 1075.0,237.5 1096.0,245.0 1108.0,243.5 1115.5,252.5 1120.0,260.0 1135.0,257.0 1144.0,258.5" fill="none" stroke="#dedede" stroke-width="0.8"/><polyline points="1027.0,218.0 1027.0,246.5" fill="none" stroke="#dedede" stroke-width="0.8"/><polyline points="1033.0,222.5 1045.0,237.5" fill="none" stroke="#dedede" stroke-width="0.8"/><polyline points="988.0,220.0 995.0,240.0" fill="none" stroke="#dedede" stroke-width="0.8"/><polyline points="972.0,234.0 995.0,240.0" fill="none" stroke="#dedede" stroke-width="0.8"/><polyline points="965.0,224.0 988.0,222.0" fill="none" stroke="#dedede" stroke-width="0.8"/><polyline points="1010.0,223.0 1026.0,225.0" fill="none" stroke="#dedede" stroke-width="0.8"/><polyline points="1026.0,225.0 1029.0,248.0" fill="none" stroke="#dedede" stroke-width="0.8"/><polyline points="1105.0,266.0 1115.0,262.0 1120.0,260.0" fill="none" stroke="#dedede" stroke-width="0.8"/><polyline points="1120.0,275.0 1130.0,270.0" fill="none" stroke="#dedede" stroke-width="0.8"/><polyline points="1221.0,306.0 1221.0,318.0" fill="none" stroke="#dedede" stroke-width="0.8"/><polyline points="1050.0,214.0 1057.0,224.0" fill="none" stroke="#dedede" stroke-width="0.8"/><polyline points="600.0,237.0 620.0,238.0 640.0,245.0" fill="none" stroke="#dedede" stroke-width="0.8"/><polyline points="1170.0,177.5 1184.0,179.0 1187.7,187.7 1203.7,194.2 1196.4,205.0" fill="none" stroke="#dedede" stroke-width="0.8"/><polyline points="668.0,190.5 690.0,196.0 710.0,198.0 730.0,190.0" fill="none" stroke="#dedede" stroke-width="0.8"/><circle cx="652" cy="210.8" r="19.4" fill="rgba(171,71,188,0.6)" stroke="rgba(150,50,170,0.8)" stroke-width="1"/><circle cx="585.5" cy="205.8" r="8.8" fill="rgba(171,71,188,0.6)" stroke="rgba(150,50,170,0.8)" stroke-width="1"/><circle cx="606.5" cy="213.8" r="7.8" fill="rgba(171,71,188,0.6)" stroke="rgba(150,50,170,0.8)" stroke-width="1"/><circle cx="599" cy="225.2" r="7.6" fill="rgba(171,71,188,0.6)" stroke="rgba(150,50,170,0.8)" stroke-width="1"/><circle cx="590.8" cy="230.8" r="7.6" fill="rgba(171,71,188,0.6)" stroke="rgba(150,50,170,0.8)" stroke-width="1"/><circle cx="699.5" cy="200.8" r="8.8" fill="rgba(171,71,188,0.6)" stroke="rgba(150,50,170,0.8)" stroke-width="1"/><circle cx="693.5" cy="224" r="7.6" fill="rgba(171,71,188,0.6)" stroke="rgba(150,50,170,0.8)" stroke-width="1"/><circle cx="680.8" cy="231" r="9.6" fill="rgba(171,71,188,0.6)" stroke="rgba(150,50,170,0.8)" stroke-width="1"/><circle cx="765.1" cy="349.1" r="7.8" fill="rgba(171,71,188,0.6)" stroke="rgba(150,50,170,0.8)" stroke-width="1"/><circle cx="877.5" cy="183" r="7.6" fill="rgba(171,71,188,0.6)" stroke="rgba(150,50,170,0.8)" stroke-width="1"/><circle cx="891.25" cy="178" r="7.6" fill="rgba(171,71,188,0.6)" stroke="rgba(150,50,170,0.8)" stroke-width="1"/><circle cx="888" cy="185.5" r="7.6" fill="rgba(171,71,188,0.6)" stroke="rgba(150,50,170,0.8)" stroke-width="1"/><circle cx="900" cy="186.75" r="7.6" fill="rgba(171,71,188,0.6)" stroke="rgba(150,50,170,0.8)" stroke-width="1"/><circle cx="898.75" cy="196.5" r="7.6" fill="rgba(171,71,188,0.6)" stroke="rgba(150,50,170,0.8)" stroke-width="1"/><circle cx="940.6" cy="145.5" r="7.8" fill="rgba(171,71,188,0.6)" stroke="rgba(150,50,170,0.8)" stroke-width="1"/><circle cx="1055.5" cy="263.7" r="7.9" fill="rgba(171,71,188,0.6)" stroke="rgba(150,50,170,0.8)" stroke-width="1"/><circle cx="1186.75" cy="222.1" r="7.9" fill="rgba(171,71,188,0.6)" stroke="rgba(150,50,170,0.8)" stroke-width="1"/><circle cx="1207.2" cy="228.8" r="7.9" fill="rgba(171,71,188,0.6)" stroke="rgba(150,50,170,0.8)" stroke-width="1"/><circle cx="1218.2" cy="226.5" r="7.9" fill="rgba(171,71,188,0.6)" stroke="rgba(150,50,170,0.8)" stroke-width="1"/><circle cx="1155.7" cy="256.6" r="7.9" fill="rgba(171,71,188,0.6)" stroke="rgba(150,50,170,0.8)" stroke-width="1"/><circle cx="1172" cy="253.8" r="7.9" fill="rgba(171,71,188,0.6)" stroke="rgba(150,50,170,0.8)" stroke-width="1"/><circle cx="1137.9" cy="289.4" r="7.9" fill="rgba(171,71,188,0.6)" stroke="rgba(150,50,170,0.8)" stroke-width="1"/><circle cx="1130.4" cy="299.6" r="7.9" fill="rgba(171,71,188,0.6)" stroke="rgba(150,50,170,0.8)" stroke-width="1"/><circle cx="1246" cy="372.7" r="7.9" fill="rgba(171,71,188,0.6)" stroke="rgba(150,50,170,0.8)" stroke-width="1"/></svg>
<div style="position:absolute;background:#fff;border-radius:4px;box-shadow:0 0 0 1px rgba(0,0,0,0.045),0 1px 2px rgba(0,0,0,0.3);left:400.5px;top:492.5px;width:980px;height:544px"></div>
<div style="position:absolute;background:#fff;border-radius:4px;box-shadow:0 0 0 1px rgba(0,0,0,0.045),0 1px 2px rgba(0,0,0,0.3);left:400.5px;top:1070.7px;width:491.5px;height:300px"></div>
<div style="position:absolute;background:#fff;border-radius:4px;box-shadow:0 0 0 1px rgba(0,0,0,0.045),0 1px 2px rgba(0,0,0,0.3);left:913px;top:1070.7px;width:490.5px;height:300px"></div>
<div style="position:absolute;left:366px;top:47px;width:1234px;height:35.5px;background:#fff"></div>
<div style="position:absolute;left:0;top:82.5px;width:1600px;height:1px;background:#dadada"></div>
<div class="t" style="top:518.66px;font-size:19.3px;color:#111;left:439.50px;-webkit-text-stroke:0.55px currentColor;transform:scaleX(0.985);transform-origin:0 0;">Compute Engine Instance Count History</div>
<div class="t" style="top:521.09px;font-size:12.3px;color:#202124;left:1193.00px;">Chart View (Last 30 days)</div>
<svg style="position:absolute;left:1338px;top:523px" width="12" height="8"><path d="M1 1.5 H10.5 L5.75 6.5Z" fill="#202124"/></svg>
<svg style="position:absolute;left:0;top:0" width="1600" height="1237">
<line x1="470" x2="1323.5" y1="947.1" y2="947.1" stroke="#f1f1f1" stroke-width="1"/>
<line x1="470" x2="1323.5" y1="892.7" y2="892.7" stroke="#f1f1f1" stroke-width="1"/>
<line x1="470" x2="1323.5" y1="838.3" y2="838.3" stroke="#f1f1f1" stroke-width="1"/>
<line x1="470" x2="1323.5" y1="783.8" y2="783.8" stroke="#f1f1f1" stroke-width="1"/>
<line x1="470" x2="1323.5" y1="729.4" y2="729.4" stroke="#f1f1f1" stroke-width="1"/>
<line x1="470" x2="1323.5" y1="675.0" y2="675.0" stroke="#f1f1f1" stroke-width="1"/>
<line x1="470" x2="1323.5" y1="620.6" y2="620.6" stroke="#f1f1f1" stroke-width="1"/>
<line x1="470" x2="1323.5" y1="919.9" y2="919.9" stroke="#dddddd" stroke-width="1"/>
<line x1="470" x2="1323.5" y1="865.5" y2="865.5" stroke="#dddddd" stroke-width="1"/>
<line x1="470" x2="1323.5" y1="811.1" y2="811.1" stroke="#dddddd" stroke-width="1"/>
<line x1="470" x2="1323.5" y1="756.6" y2="756.6" stroke="#dddddd" stroke-width="1"/>
<line x1="470" x2="1323.5" y1="702.2" y2="702.2" stroke="#dddddd" stroke-width="1"/>
<line x1="470" x2="1323.5" y1="647.8" y2="647.8" stroke="#dddddd" stroke-width="1"/>
<line x1="481.4" x2="481.4" y1="596" y2="974" stroke="#d8d8d8" stroke-width="1"/>
<line x1="552.4" x2="552.4" y1="596" y2="974" stroke="#d8d8d8" stroke-width="1"/>
<line x1="623.3" x2="623.3" y1="596" y2="974" stroke="#d8d8d8" stroke-width="1"/>
<line x1="694.3" x2="694.3" y1="596" y2="974" stroke="#d8d8d8" stroke-width="1"/>
<line x1="765.2" x2="765.2" y1="596" y2="974" stroke="#d8d8d8" stroke-width="1"/>
<line x1="836.2" x2="836.2" y1="596" y2="974" stroke="#d8d8d8" stroke-width="1"/>
<line x1="907.2" x2="907.2" y1="596" y2="974" stroke="#d8d8d8" stroke-width="1"/>
<line x1="978.1" x2="978.1" y1="596" y2="974" stroke="#d8d8d8" stroke-width="1"/>
<line x1="1049.1" x2="1049.1" y1="596" y2="974" stroke="#d8d8d8" stroke-width="1"/>
<line x1="1120.0" x2="1120.0" y1="596" y2="974" stroke="#d8d8d8" stroke-width="1"/>
<line x1="1191.0" x2="1191.0" y1="596" y2="974" stroke="#d8d8d8" stroke-width="1"/>
<line x1="1262.0" x2="1262.0" y1="596" y2="974" stroke="#d8d8d8" stroke-width="1"/>
<line x1="470" x2="1323.5" y1="974.3" y2="974.3" stroke="#444" stroke-width="1.6"/>
<polyline points="470.5,593.4 506.1,593.4 541.7,593.4 577.4,593.4 612.8,593.4 648.2,593.4 683.6,593.4 719.3,593.4 754.7,593.4 790.4,593.4 825.8,593.4 861.2,593.4 896.9,593.4 932.4,593.4 968,593.4 1003.5,593.4 1039,593.4 1074.5,593.4 1110,593.4 1145.6,593.4 1185.6,593.4 1216.6,593.4 1252,593.4 1292,593.4 1323.4,593.4" stroke="#9e9a1e" stroke-width="2" fill="none"/>
<circle cx="470.5" cy="593.4" r="3.6" fill="#9e9a1e"/>
<circle cx="506.1" cy="593.4" r="3.6" fill="#9e9a1e"/>
<circle cx="541.7" cy="593.4" r="3.6" fill="#9e9a1e"/>
<circle cx="577.4" cy="593.4" r="3.6" fill="#9e9a1e"/>
<circle cx="612.8" cy="593.4" r="3.6" fill="#9e9a1e"/>
<circle cx="648.2" cy="593.4" r="3.6" fill="#9e9a1e"/>
<circle cx="683.6" cy="593.4" r="3.6" fill="#9e9a1e"/>
<circle cx="719.3" cy="593.4" r="3.6" fill="#9e9a1e"/>
<circle cx="754.7" cy="593.4" r="3.6" fill="#9e9a1e"/>
<circle cx="790.4" cy="593.4" r="3.6" fill="#9e9a1e"/>
<circle cx="825.8" cy="593.4" r="3.6" fill="#9e9a1e"/>
<circle cx="861.2" cy="593.4" r="3.6" fill="#9e9a1e"/>
<circle cx="896.9" cy="593.4" r="3.6" fill="#9e9a1e"/>
<circle cx="932.4" cy="593.4" r="3.6" fill="#9e9a1e"/>
<circle cx="968" cy="593.4" r="3.6" fill="#9e9a1e"/>
<circle cx="1003.5" cy="593.4" r="3.6" fill="#9e9a1e"/>
<circle cx="1039" cy="593.4" r="3.6" fill="#9e9a1e"/>
<circle cx="1074.5" cy="593.4" r="3.6" fill="#9e9a1e"/>
<circle cx="1110" cy="593.4" r="3.6" fill="#9e9a1e"/>
<circle cx="1145.6" cy="593.4" r="3.6" fill="#9e9a1e"/>
<circle cx="1185.6" cy="593.4" r="3.6" fill="#9e9a1e"/>
<circle cx="1216.6" cy="593.4" r="3.6" fill="#9e9a1e"/>
<circle cx="1252" cy="593.4" r="3.6" fill="#9e9a1e"/>
<circle cx="1292" cy="593.4" r="3.6" fill="#9e9a1e"/>
<circle cx="1323.4" cy="593.4" r="3.6" fill="#9e9a1e"/>
</svg>
<div class="t" style="top:969.02px;font-size:11.2px;color:#444;right:1135.00px;">0</div>
<div class="t" style="top:914.60px;font-size:11.2px;color:#444;right:1135.00px;">20</div>
<div class="t" style="top:860.19px;font-size:11.2px;color:#444;right:1135.00px;">40</div>
<div class="t" style="top:805.78px;font-size:11.2px;color:#444;right:1135.00px;">60</div>
<div class="t" style="top:751.36px;font-size:11.2px;color:#444;right:1135.00px;">80</div>
<div class="t" style="top:696.95px;font-size:11.2px;color:#444;right:1135.00px;">100</div>
<div class="t" style="top:642.53px;font-size:11.2px;color:#444;right:1135.00px;">120</div>
<div class="t" style="top:588.12px;font-size:11.2px;color:#444;right:1135.00px;">140</div>
<div class="t" style="top:980.48px;font-size:11.6px;color:#3c3c3c;left:181.40px;width:600px;text-align:center;">May 9,</div>
<div class="t" style="top:995.58px;font-size:11.6px;color:#3c3c3c;left:181.40px;width:600px;text-align:center;">2021</div>
<div class="t" style="top:980.48px;font-size:11.6px;color:#3c3c3c;left:252.36px;width:600px;text-align:center;">May 11,</div>
<div class="t" style="top:995.58px;font-size:11.6px;color:#3c3c3c;left:252.36px;width:600px;text-align:center;">2021</div>
<div class="t" style="top:980.48px;font-size:11.6px;color:#3c3c3c;left:323.32px;width:600px;text-align:center;">May 13,</div>
<div class="t" style="top:995.58px;font-size:11.6px;color:#3c3c3c;left:323.32px;width:600px;text-align:center;">2021</div>
<div class="t" style="top:980.48px;font-size:11.6px;color:#3c3c3c;left:394.28px;width:600px;text-align:center;">May 15,</div>
<div class="t" style="top:995.58px;font-size:11.6px;color:#3c3c3c;left:394.28px;width:600px;text-align:center;">2021</div>
<div class="t" style="top:980.48px;font-size:11.6px;color:#3c3c3c;left:465.24px;width:600px;text-align:center;">May 17,</div>
<div class="t" style="top:995.58px;font-size:11.6px;color:#3c3c3c;left:465.24px;width:600px;text-align:center;">2021</div>
<div class="t" style="top:980.48px;font-size:11.6px;color:#3c3c3c;left:536.20px;width:600px;text-align:center;">May 19,</div>
<div class="t" style="top:995.58px;font-size:11.6px;color:#3c3c3c;left:536.20px;width:600px;text-align:center;">2021</div>
<div class="t" style="top:980.48px;font-size:11.6px;color:#3c3c3c;left:607.16px;width:600px;text-align:center;">May 21,</div>
<div class="t" style="top:995.58px;font-size:11.6px;color:#3c3c3c;left:607.16px;width:600px;text-align:center;">2021</div>
<div class="t" style="top:980.48px;font-size:11.6px;color:#3c3c3c;left:678.12px;width:600px;text-align:center;">May 23,</div>
<div class="t" style="top:995.58px;font-size:11.6px;color:#3c3c3c;left:678.12px;width:600px;text-align:center;">2021</div>
<div class="t" style="top:980.48px;font-size:11.6px;color:#3c3c3c;left:749.08px;width:600px;text-align:center;">May 25,</div>
<div class="t" style="top:995.58px;font-size:11.6px;color:#3c3c3c;left:749.08px;width:600px;text-align:center;">2021</div>
<div class="t" style="top:980.48px;font-size:11.6px;color:#3c3c3c;left:820.04px;width:600px;text-align:center;">May 27,</div>
<div class="t" style="top:995.58px;font-size:11.6px;color:#3c3c3c;left:820.04px;width:600px;text-align:center;">2021</div>
<div class="t" style="top:980.48px;font-size:11.6px;color:#3c3c3c;left:891.00px;width:600px;text-align:center;">May 29,</div>
<div class="t" style="top:995.58px;font-size:11.6px;color:#3c3c3c;left:891.00px;width:600px;text-align:center;">2021</div>
<div class="t" style="top:980.48px;font-size:11.6px;color:#3c3c3c;left:961.96px;width:600px;text-align:center;">May 31,</div>
<div class="t" style="top:995.58px;font-size:11.6px;color:#3c3c3c;left:961.96px;width:600px;text-align:center;">2021</div>
<div class="t" style="left:334.5px;top:776.5px;width:200px;text-align:center;font-size:11.5px;line-height:14px;color:#444;transform:rotate(-90deg)">Compute Instance Count</div>
<div class="t" style="top:1096.66px;font-size:19.3px;color:#111;left:439.00px;-webkit-text-stroke:0.55px currentColor;transform:scaleX(0.98);transform-origin:0 0;">Resources per service</div>
<div class="t" style="top:1098.09px;font-size:12.3px;color:#202124;left:740.00px;">Chart view (top 10)</div>
<svg style="position:absolute;left:849px;top:1100px" width="12" height="8"><path d="M1 1.5 H10.5 L5.75 6.5Z" fill="#202124"/></svg>
<svg style="position:absolute;left:0;top:0" width="1600" height="1237">
<line x1="573.5" x2="573.5" y1="1170" y2="1237" stroke="#e6e6e6" stroke-width="1"/>
<line x1="607.9" x2="607.9" y1="1170" y2="1237" stroke="#d8d8d8" stroke-width="1"/>
<line x1="642.3" x2="642.3" y1="1170" y2="1237" stroke="#e6e6e6" stroke-width="1"/>
<line x1="676.7" x2="676.7" y1="1170" y2="1237" stroke="#d8d8d8" stroke-width="1"/>
<line x1="711.1" x2="711.1" y1="1170" y2="1237" stroke="#e6e6e6" stroke-width="1"/>
<line x1="745.5" x2="745.5" y1="1170" y2="1237" stroke="#d8d8d8" stroke-width="1"/>
<line x1="779.9" x2="779.9" y1="1170" y2="1237" stroke="#e6e6e6" stroke-width="1"/>
<line x1="814.3" x2="814.3" y1="1170" y2="1237" stroke="#d8d8d8" stroke-width="1"/>
<rect x="539.1" y="1173.0" width="239.1" height="16.6" fill="#5c6bc0"/>
<line x1="778.2" x2="789.2" y1="1181.3" y2="1181.3" stroke="#999" stroke-width="1"/>
<rect x="539.1" y="1193.6" width="144.6" height="16.6" fill="#5c6bc0"/>
<line x1="683.7" x2="694.7" y1="1201.9" y2="1201.9" stroke="#999" stroke-width="1"/>
<rect x="539.1" y="1214.2" width="118.0" height="16.6" fill="#5c6bc0"/>
<line x1="657.1" x2="668.1" y1="1222.5" y2="1222.5" stroke="#999" stroke-width="1"/>
<rect x="539.1" y="1234.8" width="29.7" height="16.6" fill="#5c6bc0"/>
<line x1="539.1" x2="539.1" y1="1170" y2="1237" stroke="#333" stroke-width="1"/>
</svg>
<div class="t" style="top:1175.65px;font-size:11.4px;color:#222;right:1063.40px;">compute</div>
<div class="t" style="top:1175.51px;font-size:11.8px;color:#3949a0;left:789.70px;">6,966</div>
<div class="t" style="top:1196.25px;font-size:11.4px;color:#222;right:1063.40px;">serviceusage</div>
<div class="t" style="top:1196.11px;font-size:11.8px;color:#3949a0;left:695.20px;">4,208</div>
<div class="t" style="top:1216.85px;font-size:11.4px;color:#222;right:1063.40px;">rbac</div>
<div class="t" style="top:1216.71px;font-size:11.8px;color:#3949a0;left:668.60px;">3,433</div>
<div class="t" style="top:1096.66px;font-size:19.3px;color:#111;left:951.50px;-webkit-text-stroke:0.55px currentColor;transform:scaleX(0.98);transform-origin:0 0;">Resources per type</div>
<div class="t" style="top:1098.09px;font-size:12.3px;color:#202124;left:1252.00px;">Chart view (top 10)</div>
<svg style="position:absolute;left:1361px;top:1100px" width="12" height="8"><path d="M1 1.5 H10.5 L5.75 6.5Z" fill="#202124"/></svg>
<svg style="position:absolute;left:0;top:0" width="1600" height="1237">
<line x1="1097.5" x2="1097.5" y1="1170" y2="1237" stroke="#e6e6e6" stroke-width="1"/>
<line x1="1143.25" x2="1143.25" y1="1170" y2="1237" stroke="#d8d8d8" stroke-width="1"/>
<line x1="1189.0" x2="1189.0" y1="1170" y2="1237" stroke="#e6e6e6" stroke-width="1"/>
<line x1="1234.75" x2="1234.75" y1="1170" y2="1237" stroke="#d8d8d8" stroke-width="1"/>
<line x1="1280.5" x2="1280.5" y1="1170" y2="1237" stroke="#e6e6e6" stroke-width="1"/>
<line x1="1326.25" x2="1326.25" y1="1170" y2="1237" stroke="#d8d8d8" stroke-width="1"/>
<rect x="1051.8" y="1173.0" width="192.0" height="16.6" fill="#c2185b"/>
<line x1="1243.8" x2="1254.8" y1="1181.3" y2="1181.3" stroke="#999" stroke-width="1"/>
<rect x="1051.8" y="1193.6" width="129.8" height="16.6" fill="#c2185b"/>
<line x1="1181.6" x2="1192.6" y1="1201.9" y2="1201.9" stroke="#999" stroke-width="1"/>
<rect x="1051.8" y="1214.2" width="119.5" height="16.6" fill="#c2185b"/>
<line x1="1171.3" x2="1182.3" y1="1222.5" y2="1222.5" stroke="#999" stroke-width="1"/>
<rect x="1051.8" y="1234.8" width="70.7" height="16.6" fill="#c2185b"/>
<line x1="1051.8" x2="1051.8" y1="1170" y2="1237" stroke="#333" stroke-width="1"/>
</svg>
<div class="t" style="top:1175.65px;font-size:11.4px;color:#222;right:550.70px;">serviceusage.Se…</div>
<div class="t" style="top:1175.51px;font-size:11.8px;color:#880e4f;left:1255.30px;">4,208</div>
<div class="t" style="top:1196.25px;font-size:11.4px;color:#222;right:550.70px;">compute.Route</div>
<div class="t" style="top:1196.11px;font-size:11.8px;color:#880e4f;left:1193.10px;">2,839</div>
<div class="t" style="top:1216.85px;font-size:11.4px;color:#222;right:550.70px;">compute.Subnet…</div>
<div class="t" style="top:1216.71px;font-size:11.8px;color:#880e4f;left:1182.80px;">2,614</div>
</body></html>
